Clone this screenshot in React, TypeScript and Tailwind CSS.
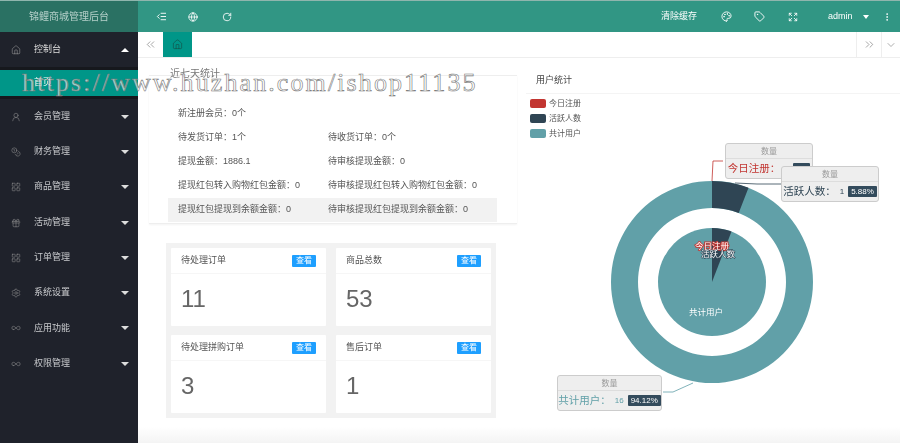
import { ChevronDown, ChevronsLeft, ChevronsRight, Coins, Expand, Gift, Home, IndentDecrease, LayoutGrid, MoreVertical, Palette, RotateCw, Settings, Tag, UserRound, Infinity as InfinityIcon, Globe } from "lucide-react"

const menu = [
  { label: "会员管理", Icon: UserRound },
  { label: "财务管理", Icon: Coins },
  { label: "商品管理", Icon: LayoutGrid },
  { label: "活动管理", Icon: Gift },
  { label: "订单管理", Icon: LayoutGrid },
  { label: "系统设置", Icon: Settings },
  { label: "应用功能", Icon: InfinityIcon },
  { label: "权限管理", Icon: InfinityIcon },
]

const stats = [
  ["新注册会员：0个", ""],
  ["待发货订单：1个", "待收货订单：0个"],
  ["提现金额：1886.1", "待审核提现金额：0"],
  ["提现红包转入购物红包金额：0", "待审核提现红包转入购物红包金额：0"],
  ["提现红包提现到余额金额：0", "待审核提现红包提现到余额金额：0"],
]

const cards = [
  { title: "待处理订单", value: "11" },
  { title: "商品总数", value: "53" },
  { title: "待处理拼购订单", value: "3" },
  { title: "售后订单", value: "1" },
]

const legend = [
  { label: "今日注册", color: "bg-[#c23531]" },
  { label: "活跃人数", color: "bg-[#2f4554]" },
  { label: "共计用户", color: "bg-[#61a0a8]" },
]

const Caret = ({ up }: { up?: boolean }) => (
  <span className={`ml-auto mr-[9px] h-0 w-0 border-x-[4px] border-x-transparent ${up ? "border-b-[4px] border-b-white" : "border-t-[4px] border-t-[#ddd]"}`} />
)

const Tooltip = ({ name, count, percent, color, className }: { name: string; count: string; percent: string; color: string; className: string }) => (
  <div className={`absolute rounded-[3px] border border-[#ccc] bg-[#eee] ${className}`}>
    <div className="h-[15px] border-b border-[#ddd] text-center text-[8px] leading-[15px] text-[#999]">数量</div>
    <div className="flex h-[19px] items-center justify-center gap-[4px] whitespace-nowrap">
      <span className={`text-[10.5px] ${color}`}>{name}：</span>
      <span className={`text-[8px] ${color}`}>{count}</span>
      <span className="rounded-[1px] bg-[#334b5c] px-[3px] text-[8px] leading-[11px] text-white">{percent}</span>
    </div>
  </div>
)

const App = () => {
  return (
    <div className="relative h-[443px] w-[900px] overflow-hidden bg-white font-['Liberation_Sans','Noto_Sans_CJK_SC',sans-serif] text-[9px] text-[#555]">
      <div className="blur-[0.35px]">
        <header className="flex h-[32px] border-t border-[#8fb5ad] bg-[#319684] text-white">
          <div className="flex w-[138px] items-center justify-center bg-[#2a7163] text-[10px] text-[#b5d0ca]">锦鲤商城管理后台</div>
          <div className="flex flex-1 items-center">
            <IndentDecrease size={11} className="ml-[18px]" />
            <Globe size={10} className="ml-[21px]" />
            <RotateCw size={10} className="ml-[24px]" />
            <span className="ml-[429px]">清除缓存</span>
            <Palette size={11} className="ml-[24px]" />
            <Tag size={11} className="ml-[22px]" />
            <Expand size={10} className="ml-[23px]" />
            <span className="ml-[30px] text-[9px]">admin</span>
            <span className="ml-[10px] h-0 w-0 border-x-[3.5px] border-t-[4px] border-x-transparent border-t-white" />
            <MoreVertical size={10} className="ml-[13px]" />
          </div>
        </header>

        <div className="flex h-[411px]">
          <aside className="w-[138px] shrink-0 bg-[#1f222b] text-[#c9cbce]">
            <div className="flex h-[35px] items-center pl-[11px] text-[#ddd]">
              <Home size={10} strokeWidth={1.2} className="text-[#aaa]" />
              <span className="ml-[13px]">控制台</span>
              <Caret up />
            </div>
            <div className="bg-[#16181d] py-[3px]">
              <div className="flex h-[26px] items-center bg-[#009688] pl-[34px] text-white">首页</div>
            </div>
            {menu.map(({ label, Icon }) => (
              <div key={label} className="flex h-[35.3px] items-center pl-[11px]">
                <Icon size={10} strokeWidth={1.2} className="text-[#999]" />
                <span className="ml-[13px]">{label}</span>
                <Caret />
              </div>
            ))}
          </aside>

          <main className="flex min-w-0 flex-1 flex-col bg-[linear-gradient(to_bottom,#fff_96%,#f4f4f4)]">
            <nav className="flex h-[26px] shrink-0 border-b border-[#eee]">
              <div className="flex w-[25px] items-center justify-center text-[#777]">
                <ChevronsLeft size={13} strokeWidth={1.2} />
              </div>
              <div className="flex w-[29px] items-center justify-center bg-[#009688] text-[#17433c]">
                <Home size={11} strokeWidth={1.2} />
              </div>
              <div className="ml-auto flex w-[25px] items-center justify-center border-l border-[#eee] text-[#777]">
                <ChevronsRight size={13} strokeWidth={1.2} />
              </div>
              <div className="flex w-[19px] items-center justify-center border-l border-[#eee] text-[#777]">
                <ChevronDown size={12} strokeWidth={1.2} />
              </div>
            </nav>

            <div className="flex flex-1">
              <div className="w-[379px] shrink-0 pl-[11px]">
                <section className="mt-[17px] h-[149px] border-y border-[#eee] pl-[19px] pr-[20px] shadow-[0_1px_2px_rgba(0,0,0,0.05)]">
                  <h2 className="-mt-[10px] ml-[2px] h-[26px] text-[10px] leading-[16px] text-[#777]">近七天统计</h2>
                  <div className="pt-[10px]">
                    {stats.map(([left, right], i) => (
                      <div key={left} className={`grid h-[24px] grid-cols-[150px_1fr] items-center pl-[10px] ${i === 4 ? "bg-[#f2f2f2]" : ""}`}>
                        <span>{left}</span>
                        <span>{right}</span>
                      </div>
                    ))}
                  </div>
                </section>

                <section className="ml-[17px] mt-[19px] grid h-[175px] w-[330px] grid-cols-2 gap-x-[10px] gap-y-[9px] bg-[#f2f2f2] p-[5px]">
                  {cards.map((card) => (
                    <article key={card.title} className="rounded-[1px] bg-white">
                      <div className="flex h-[26px] items-center justify-between border-b border-[#f6f6f6] px-[10px]">
                        <h3 className="text-[9px] text-[#555]">{card.title}</h3>
                        <span className="rounded-[1px] bg-[#1e9fff] px-[4px] text-[8px] leading-[12px] text-white">查看</span>
                      </div>
                      <p className="pl-[10px] pt-[10px] text-[24px] leading-[30px] text-[#666]">{card.value}</p>
                    </article>
                  ))}
                </section>
              </div>

              <section className="relative flex-1">
                <h2 className="ml-[9px] h-[36px] border-b border-[#f4f4f4] pl-[10px] pt-[15px] text-[9px] leading-[14px] text-[#444]">用户统计</h2>
                <ul className="ml-[13px] mt-[2px]">
                  {legend.map((item) => (
                    <li key={item.label} className="flex h-[15px] items-center text-[8px]">
                      <span className={`h-[9px] w-[16px] rounded-[2px] ${item.color}`} />
                      <span className="ml-[3px]">{item.label}</span>
                    </li>
                  ))}
                </ul>

                <svg className="absolute left-0 top-0" width="383" height="385" viewBox="0 0 383 385">
                  <path d="M195 123A101 101 0 1 1 194.99 123ZM195 150A74 74 0 1 0 195.01 150Z" fill="#61a0a8" />
                  <path d="M195 123A101 101 0 0 1 231.5 129.8L221.7 155A74 74 0 0 0 195 150Z" fill="#2f4554" />
                  <circle cx="195" cy="224" r="54" fill="#61a0a8" />
                  <path d="M195 224V170A54 54 0 0 1 214.5 173.6Z" fill="#2f4554" />
                  <path d="M195 123L196 103H206" fill="none" stroke="#c23531" strokeWidth="0.8" />
                  <path d="M218 125L240 126H264" fill="none" stroke="#2f4554" strokeWidth="0.8" />
                  <path d="M176 325L156 334H146" fill="none" stroke="#61a0a8" strokeWidth="0.8" />
                  <text x="195" y="191" textAnchor="middle" fontSize="8.5" fill="#fff" stroke="#c23531" strokeWidth="1.6" paintOrder="stroke">今日注册</text>
                  <text x="201" y="199" textAnchor="middle" fontSize="8.5" fill="#fff" stroke="#2f4554" strokeWidth="1.2" paintOrder="stroke">活跃人数</text>
                  <text x="189" y="257" textAnchor="middle" fontSize="8.5" fill="#fff">共计用户</text>
                </svg>

                <Tooltip name="今日注册" count="0" percent="0%" color="text-[#c23531]" className="left-[208px] top-[85px] w-[88px]" />
                <Tooltip name="活跃人数" count="1" percent="5.88%" color="text-[#2f4554]" className="left-[264px] top-[108px] w-[98px]" />
                <Tooltip name="共计用户" count="16" percent="94.12%" color="text-[#61a0a8]" className="left-[40px] top-[317px] w-[105px]" />
              </section>
            </div>
          </main>
        </div>
      </div>

      <div className="pointer-events-none absolute left-[22px] top-[66px] whitespace-nowrap font-['Liberation_Serif',serif] text-[26px] leading-[34px] tracking-[2.1px] text-white/60 [-webkit-text-stroke:0.6px_#777]">
        https://www.huzhan.com/ishop11135
      </div>
    </div>
  )
}

export default App
